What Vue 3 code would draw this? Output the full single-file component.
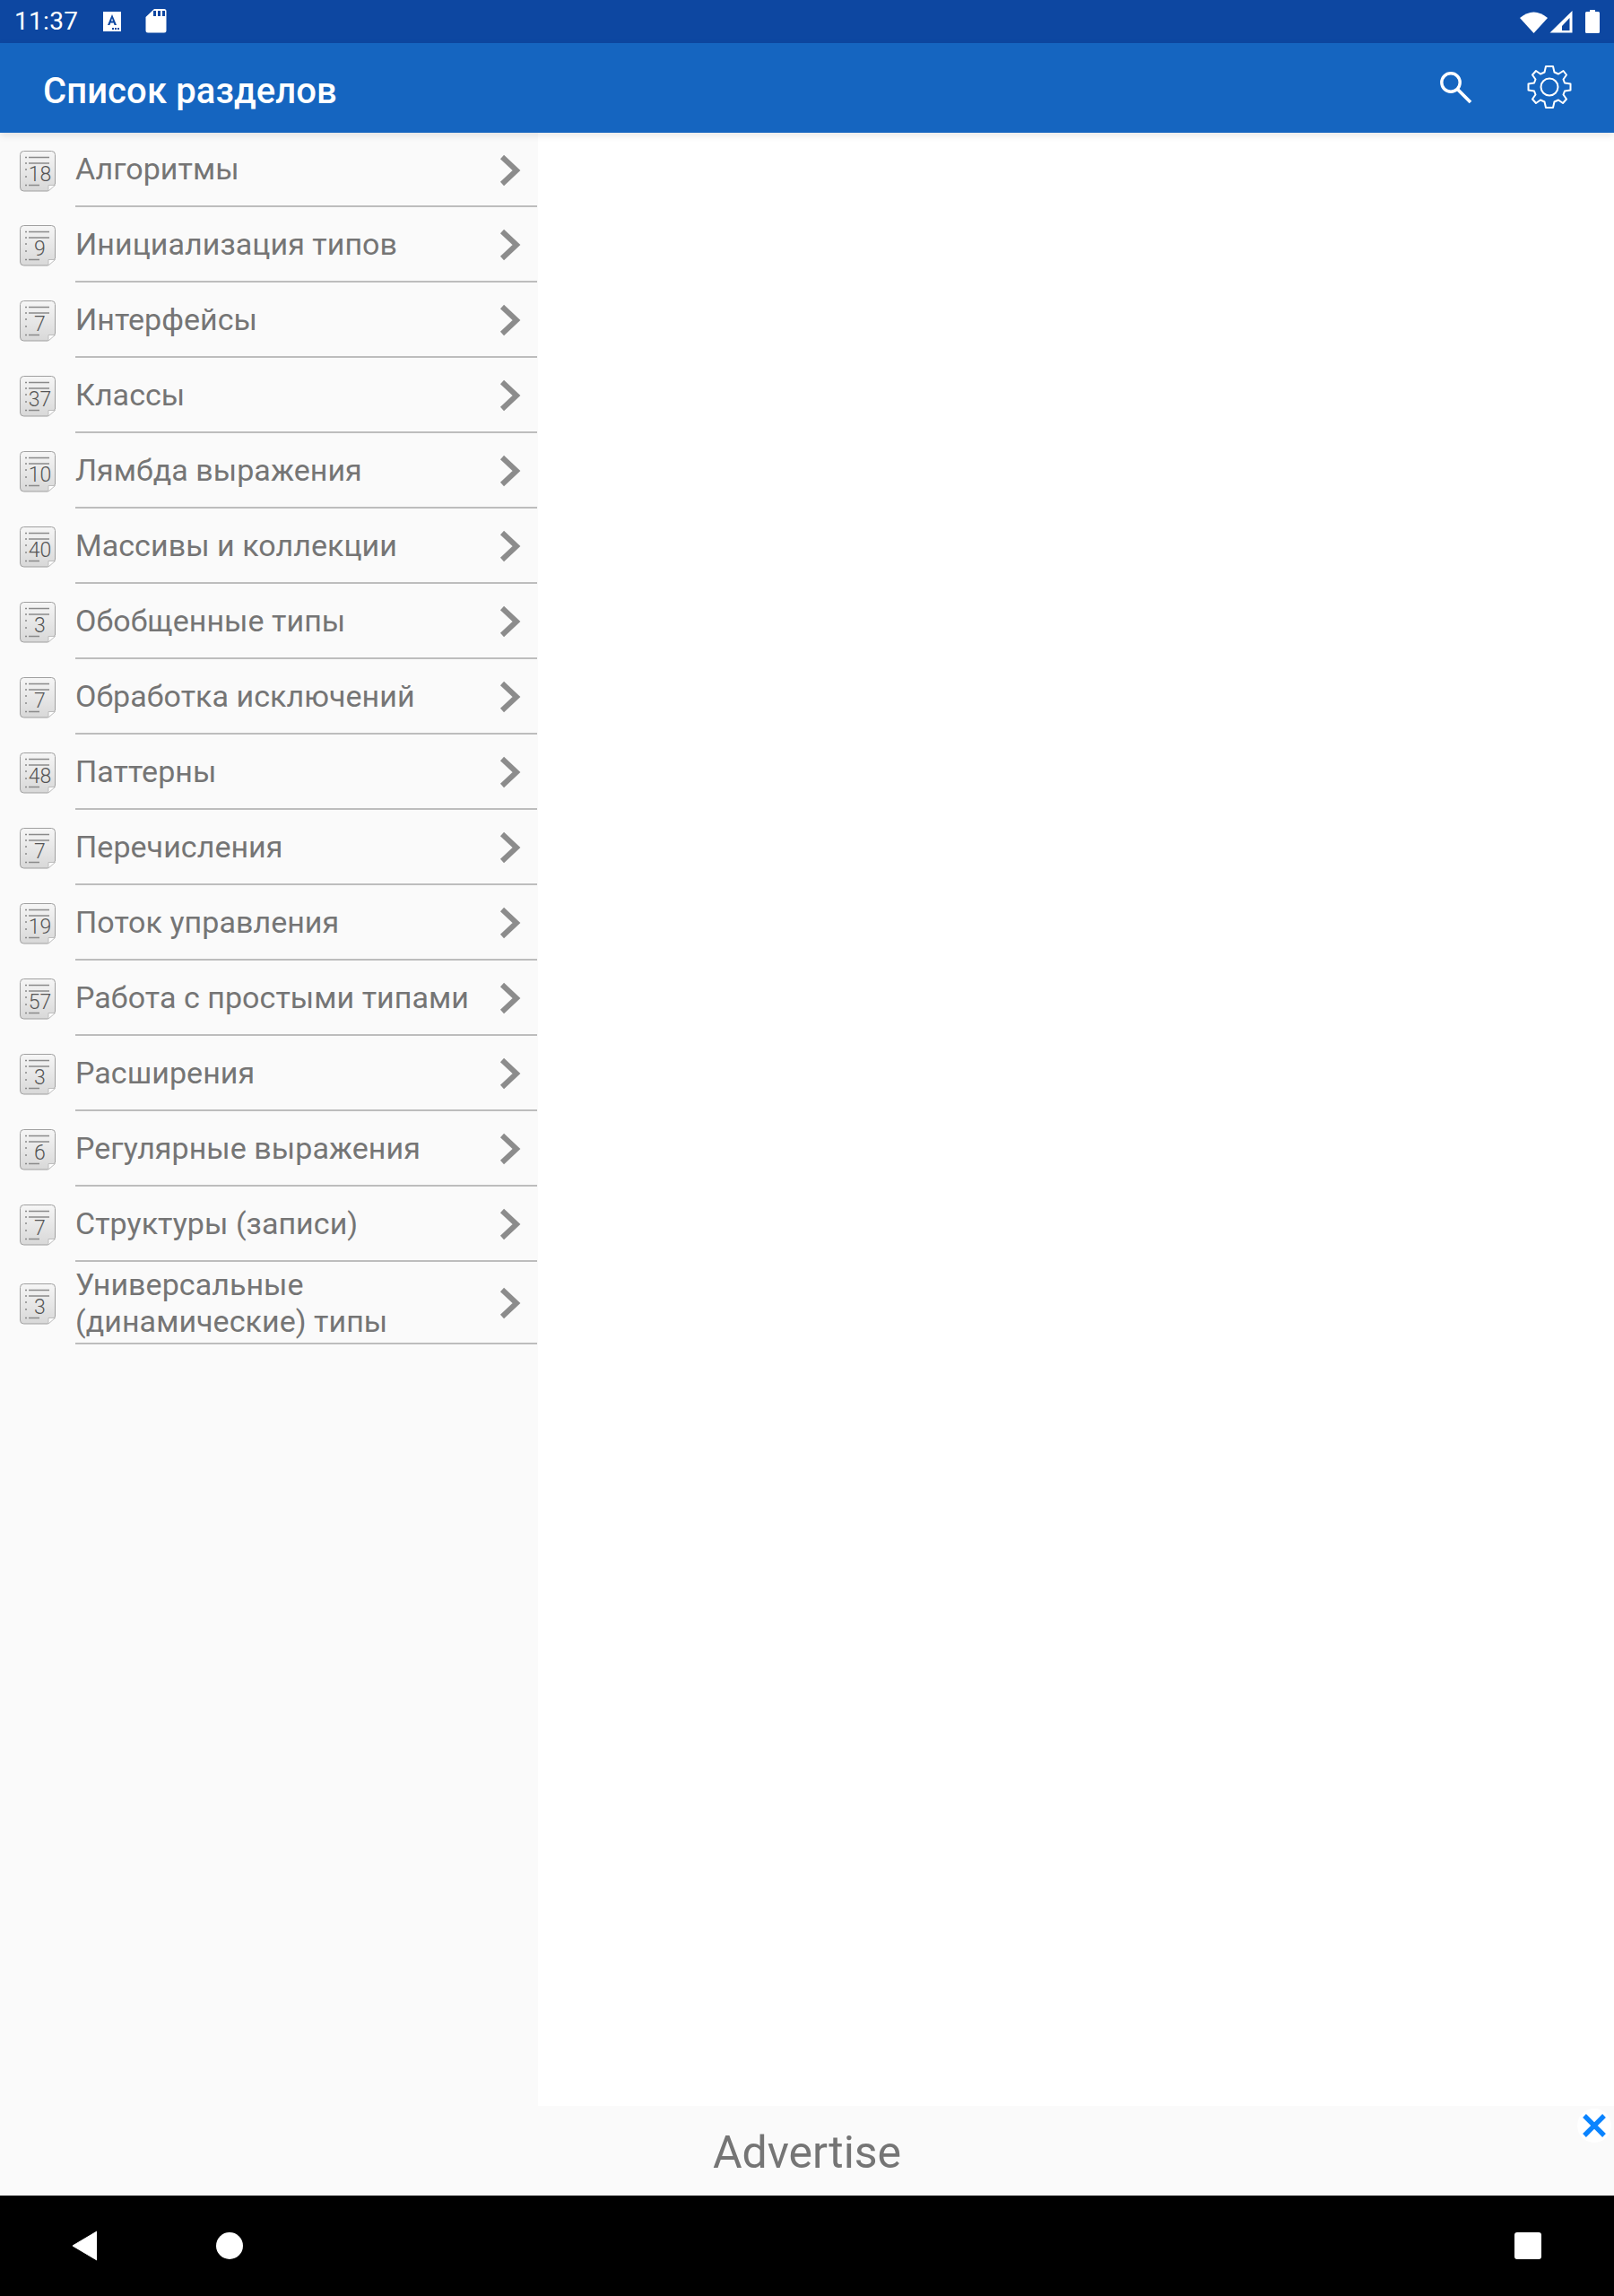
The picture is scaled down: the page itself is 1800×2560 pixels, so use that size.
<template>
  <div class="screen">
    <div class="status-bar">
      <span class="time">11:37</span>
      <svg class="st-a" width="20" height="22" viewBox="0 0 20 22">
        <rect width="20" height="22" fill="#fff" />
        <path d="M10 3 L15 15 H12.6 L11.7 12.4 H8.3 L7.4 15 H5 Z M9 10.4 H11 L10 7.4 Z" fill="#0d47a1" fill-rule="evenodd" />
        <path d="M10 18h2v2h-2zM13 18h2v2h-2zM16 18h2v2h-2z" fill="#0d47a1" />
      </svg>
      <svg class="st-sd" width="24" height="28" viewBox="0 0 24 28">
        <path d="M10 1 H21 a2.5 2.5 0 0 1 2.5 2.5 V25 a2.5 2.5 0 0 1 -2.5 2.5 H3 A2.5 2.5 0 0 1 .5 25 V10 Z" fill="#fff" />
        <path d="M9 3h3v6H9zM14 3h3v6h-3zM19 3h3v6h-3z" fill="#0d47a1" />
      </svg>
      <span class="spacer"></span>
      <svg class="st-wifi" width="31" height="25" viewBox="0 0 31 25">
        <path d="M15.5 25 L0 8 Q15.5 -5 31 8 Z" fill="#fff" />
      </svg>
      <svg class="st-signal" width="26" height="25" viewBox="0 0 26 25">
        <path d="M25.5 0 V24.5 H0.5 Z M22.5 8 L14 17 V22 H22.5 Z" fill="#fff" fill-rule="evenodd" />
      </svg>
      <svg class="st-batt" width="16" height="26" viewBox="0 0 16 26">
        <path d="M5 0 H11 V2 H14.5 a1.5 1.5 0 0 1 1.5 1.5 V24.5 a1.5 1.5 0 0 1 -1.5 1.5 H1.5 A1.5 1.5 0 0 1 0 24.5 V3.5 A1.5 1.5 0 0 1 1.5 2 H5 Z" fill="#fff" />
      </svg>
    </div>

    <div class="toolbar">
      <span class="title">Список разделов</span>
      <svg class="search" width="36" height="36" viewBox="0 0 36 36">
        <circle cx="12" cy="12" r="10.2" fill="none" stroke="#fff" stroke-width="3.4" />
        <path d="M19.5 19.5 L34 34" stroke="#fff" stroke-width="3.8" fill="none" />
      </svg>
      <svg class="gear" width="50" height="50" viewBox="0 0 50 50">
        <circle cx="25" cy="25" r="9.5" fill="none" stroke="#fff" stroke-width="2" />
        <path d="M21 2 H29 L30.5 8.5 L35 10.5 L40.5 7 L44 11.5 L40.5 16.5 L42 20.5 L48.5 21.5 V28.5 L42 29.5 L40.5 33.5 L44 38.5 L40 43 L35 39.5 L30.5 41.5 L29 48 H21 L19.5 41.5 L15 39.5 L10 43 L6 38.5 L9.5 33.5 L8 29.5 L1.5 28.5 V21.5 L8 20.5 L9.5 16.5 L6 11.5 L10 7 L15 10.5 L19.5 8.5 Z" fill="none" stroke="#fff" stroke-width="2" stroke-linejoin="round" />
      </svg>
    </div>

    <div class="content">
      <div class="list">
        <div v-for="s in sections" :key="s.name" class="row" :class="{ tall: s.tall }">
          <svg class="doc" width="40" height="46" viewBox="0 0 40 46">
            <defs>
              <linearGradient id="docfill" x1="0" y1="0" x2="0" y2="1">
                <stop offset="0" stop-color="#f6f6f6" />
                <stop offset="1" stop-color="#d8d8d8" />
              </linearGradient>
            </defs>
            <path d="M4 .5 H35 a4 4 0 0 1 4 4 V37 L31 45 H4 a4 4 0 0 1 -4 -4 V4.5 a4 4 0 0 1 4 -4 Z" transform="translate(.5 0)" fill="url(#docfill)" stroke="#a0a0a0" />
            <path d="M32 45 V38.5 H39.5 Z" fill="#fff" stroke="#bdbdbd" />
            <path d="M10 7.5 H33 M10 14 H33 M10 38.5 H22" stroke="#8a8a8a" stroke-width="1.5" />
            <path d="M6 7.5 H8 M6 14 H8 M6 21 H8 M6 29 H8 M6 38.5 H8" stroke="#8a8a8a" stroke-width="1.5" />
            <text x="22.5" y="34" text-anchor="middle" class="doc-num">{{ s.count }}</text>
          </svg>
          <div class="row-body">
            <span class="row-name">{{ s.name }}</span>
            <svg class="chev" width="24" height="36" viewBox="0 0 24 36">
              <path d="M3 3 L19 18 L3 33" fill="none" stroke="#8c8c8c" stroke-width="6" />
            </svg>
          </div>
        </div>
      </div>
      <div class="detail"></div>
    </div>

    <div class="ad">
      <span class="ad-text">Advertise</span>
      <div class="ad-close">
        <svg width="26" height="26" viewBox="0 0 26 26">
          <path d="M2 2 L24 24 M24 2 L2 24" stroke="#0a84ff" stroke-width="5.4" />
        </svg>
      </div>
    </div>

    <div class="nav-bar">
      <svg class="nav-back" width="28" height="34" viewBox="0 0 28 34">
        <path d="M28 1 V33 L1 17 Z" fill="#fff" stroke="#fff" stroke-linejoin="round" />
      </svg>
      <span class="nav-home"></span>
      <span class="spacer"></span>
      <span class="nav-recent"></span>
    </div>
  </div>
</template>

<script setup>
const sections = [
  { name: 'Алгоритмы', count: 18 },
  { name: 'Инициализация типов', count: 9 },
  { name: 'Интерфейсы', count: 7 },
  { name: 'Классы', count: 37 },
  { name: 'Лямбда выражения', count: 10 },
  { name: 'Массивы и коллекции', count: 40 },
  { name: 'Обобщенные типы', count: 3 },
  { name: 'Обработка исключений', count: 7 },
  { name: 'Паттерны', count: 48 },
  { name: 'Перечисления', count: 7 },
  { name: 'Поток управления', count: 19 },
  { name: 'Работа с простыми типами', count: 57 },
  { name: 'Расширения', count: 3 },
  { name: 'Регулярные выражения', count: 6 },
  { name: 'Структуры (записи)', count: 7 },
  { name: 'Универсальные (динамические) типы', count: 3, tall: true },
];
</script>

<style>
html, body {
  margin: 0;
  background: #fff;
}
</style>

<style scoped>
.screen {
  width: 1800px;
  height: 2560px;
  display: flex;
  flex-direction: column;
  font-family: Roboto, "Liberation Sans", sans-serif;
  overflow: hidden;
}

.spacer {
  flex: 1;
}

.status-bar {
  height: 48px;
  background: #0d47a1;
  display: flex;
  align-items: center;
  padding: 0 16px;
  flex-shrink: 0;
}

.time {
  color: #fff;
  font-size: 28px;
  letter-spacing: 0.3px;
  line-height: 48px;
  width: 99px;
}

.st-sd {
  margin-left: 27px;
  margin-top: -2px;
}

.st-signal {
  margin-left: 2px;
}

.st-batt {
  margin-left: 14px;
}

.toolbar {
  height: 100px;
  background: #1565c0;
  display: flex;
  align-items: center;
  padding: 0 47px 0 48px;
  flex-shrink: 0;
  position: relative;
  z-index: 1;
  box-shadow: 0 3px 8px rgba(0, 0, 0, 0.1);
}

.title {
  color: #fff;
  font-size: 40px;
  font-weight: 500;
  letter-spacing: 0.1px;
  flex: 1;
  position: relative;
  top: 3px;
}

.search {
  margin-right: 61px;
}

.gear {
  position: relative;
  top: -1px;
}

.content {
  flex: 1;
  display: flex;
  min-height: 0;
}

.list {
  width: 600px;
  background: #fafafa;
  flex-shrink: 0;
}

.detail {
  flex: 1;
  background: #fff;
}

.row {
  height: 84px;
  display: flex;
  align-items: center;
  padding-left: 22px;
}

.row:first-child {
  height: 83px;
}

.row.tall {
  height: 92px;
}

.doc {
  flex-shrink: 0;
  margin-right: 22px;
  margin-top: 2px;
}

.doc-num {
  font-family: Roboto, sans-serif;
  font-size: 23px;
  font-weight: 300;
  fill: #555;
}

.row-body {
  flex: 1;
  height: 100%;
  box-sizing: border-box;
  border-bottom: 2px solid #bdbdbd;
  display: flex;
  align-items: center;
  margin-right: 1px;
  padding-right: 18px;
  min-width: 0;
}

.row-name {
  flex: 1;
  color: #757575;
  font-size: 34px;
  letter-spacing: 0.05px;
  line-height: 41px;
}

.row.tall .row-name {
  padding-right: 100px;
  padding-top: 2px;
}

.chev {
  flex-shrink: 0;
  margin-top: 2px;
}

.ad {
  height: 100px;
  background: #fafafa;
  flex-shrink: 0;
  display: flex;
  align-items: center;
  justify-content: center;
  position: relative;
}

.ad-text {
  color: #757575;
  font-size: 50px;
  position: relative;
  top: 2px;
}

.ad-close {
  position: absolute;
  right: 3px;
  top: 3px;
  width: 38px;
  height: 38px;
  border-radius: 50%;
  background: #fff;
  display: flex;
  align-items: center;
  justify-content: center;
}

.nav-bar {
  height: 112px;
  background: #000;
  display: flex;
  align-items: center;
  flex-shrink: 0;
  padding: 0 81px 0 80px;
}

.nav-home {
  width: 30px;
  height: 30px;
  border-radius: 50%;
  background: #fff;
  margin-left: 133px;
}

.nav-recent {
  width: 30px;
  height: 30px;
  border-radius: 3px;
  background: #fff;
}
</style>
